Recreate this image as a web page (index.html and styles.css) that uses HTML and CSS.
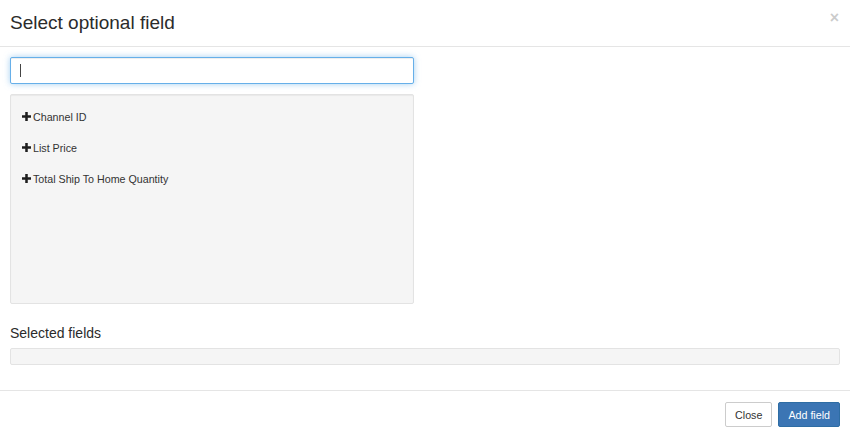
FILE: index.html
```html
<!DOCTYPE html>
<html lang="en">
<head>
  <meta charset="UTF-8" />
  <meta name="viewport" content="width=device-width, initial-scale=1" />
  <title>Select optional field</title>
  <link rel="stylesheet" href="styles.css">
</head>
<body>

  <div class="modal">

    <!-- Header -->
    <div class="modal-header">
      <h4 class="modal-title">Select optional field</h4>
      <button class="close" type="button">&times;</button>
    </div>

    <!-- Body -->
    <div class="modal-body">
      <div class="search-wrap">
        <input class="search" type="text" />
        <span class="caret"></span>
      </div>

      <ul class="field-list">
        <li>
          <svg class="plus" viewBox="0 0 10 10"><path d="M3.6 0h2.8v3.6H10v2.8H6.4V10H3.6V6.4H0V3.6h3.6z" /></svg>
          Channel ID
        </li>
        <li>
          <svg class="plus" viewBox="0 0 10 10"><path d="M3.6 0h2.8v3.6H10v2.8H6.4V10H3.6V6.4H0V3.6h3.6z" /></svg>
          List Price
        </li>
        <li>
          <svg class="plus" viewBox="0 0 10 10"><path d="M3.6 0h2.8v3.6H10v2.8H6.4V10H3.6V6.4H0V3.6h3.6z" /></svg>
          Total Ship To Home Quantity
        </li>
      </ul>

      <h5 class="section-title">Selected fields</h5>
      <div class="selected-box"></div>
    </div>

    <!-- Footer -->
    <div class="modal-footer">
      <button class="btn btn-default" type="button">Close</button>
      <button class="btn btn-primary" type="button">Add field</button>
    </div>

  </div>

</body>
</html>
```

FILE: styles.css
```css
* {
  margin: 0; padding: 0; box-sizing: border-box;
}
html, body {
  height: 100%;
}
body {
  font-family: "Liberation Sans", Arial, sans-serif;
  font-size: 10.7px;
  color: #333;
  background: #fff;
  overflow: hidden;
}
.modal {
  width: 850px;
  height: 436px;
  background: #fff;
}
.modal-header {
  display: flex;
  justify-content: space-between;
  align-items: flex-start;
  padding: 12px 10px 13px;
  border-bottom: 1px solid #e5e5e5;
}
.modal-title {
  font-size: 19px;
  font-weight: normal;
  line-height: 21px;
  color: #2b2b2b;
}
.close {
  background: none;
  border: none;
  font-family: "Liberation Sans", Arial, sans-serif;
  font-size: 16px;
  font-weight: bold;
  line-height: 1;
  color: #000;
  opacity: 0.2;
  margin-top: -2px;
  margin-right: 1px;
  cursor: pointer;
}
.modal-body {
  padding: 10px 10px 0;
}
.search-wrap {
  position: relative;
  width: 404px;
}
.search {
  display: block;
  width: 404px;
  height: 27px;
  padding: 4px 9px;
  font-family: inherit;
  font-size: 11px;
  color: #555;
  border: 1px solid #66afe9;
  border-radius: 2px;
  outline: none;
  box-shadow: inset 0 1px 1px rgba(0,0,0,.075), 0 0 6px rgba(102,175,233,.6);
}
.caret {
  position: absolute;
  left: 10px;
  top: 7px;
  width: 1px;
  height: 13px;
  background: #444;
}
.field-list {
  list-style: none;
  width: 404px;
  height: 210px;
  margin-top: 10px;
  padding: 6px 11px;
  background: #f5f5f5;
  border: 1px solid #e3e3e3;
  border-radius: 2px;
  box-shadow: inset 0 1px 1px rgba(0,0,0,.05);
}
.field-list li {
  display: flex;
  align-items: center;
  gap: 2px;
  height: 31px;
  color: #333;
  cursor: pointer;
}
.plus {
  width: 9px;
  height: 9px;
  fill: #1e1e1e;
  margin-top: -1px;
}
.section-title {
  font-size: 14px;
  font-weight: normal;
  line-height: 16px;
  margin-top: 21px;
  color: #2b2b2b;
}
.selected-box {
  height: 17px;
  margin-top: 7px;
  background: #f5f5f5;
  border: 1px solid #e3e3e3;
  border-radius: 2px;
}
.modal-footer {
  display: flex;
  justify-content: flex-end;
  gap: 6px;
  margin-top: 25px;
  padding: 11px 10px;
  border-top: 1px solid #e5e5e5;
}
.btn {
  height: 25px;
  padding: 0 9px;
  font-family: inherit;
  font-size: 10.7px;
  border: 1px solid transparent;
  border-radius: 2px;
  cursor: pointer;
}
.btn-default {
  color: #333;
  background: #fff;
  border-color: #ccc;
}
.btn-primary {
  color: #fff;
  background: #3b75b4;
  border-color: #2e6da4;
}
```
